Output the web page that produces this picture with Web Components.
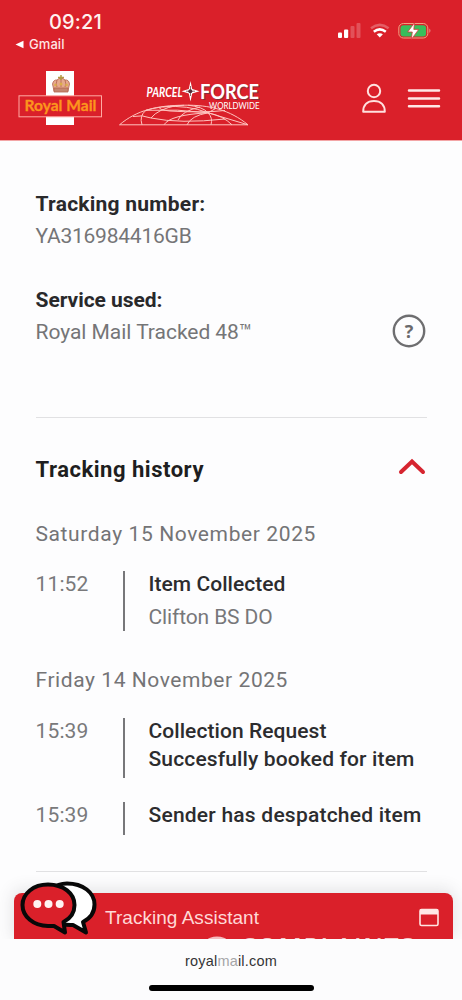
<!DOCTYPE html>
<html lang="en">
<head>
<meta charset="utf-8">
<title>Tracking</title>
<style>
html, body { margin: 0; height: 100%; overflow: hidden; background: #fdfdfe; }
body { font-family: Roboto, "Liberation Sans", sans-serif; color: #2b2b2d; }
</style>
</head>
<body>
<tracking-page></tracking-page>
<script>
const define = (name, html, ready) => customElements.define(name, class extends HTMLElement {
  connectedCallback() {
    if (this.shadowRoot) return;
    const t = document.createElement('template');
    t.innerHTML = html;
    this.attachShadow({ mode: 'open' }).appendChild(t.content.cloneNode(true));
    if (ready) ready(this);
  }
});

/* Single line of text whose letter spacing is adjusted to fill the width in "w". */
define('fit-text', `<style>:host{display:block;white-space:nowrap}span{display:inline-block}</style><span><slot></slot></span>`, el => {
  const span = el.shadowRoot.querySelector('span');
  const n = el.textContent.length;
  const natural = span.getBoundingClientRect().width;
  span.style.letterSpacing = ((+el.getAttribute('w') - natural) / n).toFixed(3) + 'px';
});

define('status-bar', `<style>
:host{display:flex;justify-content:space-between;height:62px;color:#fff;font-family:Inter,sans-serif}
.l{padding:10px 0 0 15px}
.time{padding-left:34px;font-size:20px;line-height:24px;font-weight:500;color:#fff2ef}
.back{display:flex;align-items:center;gap:5px;margin-top:1px;font-size:13px;line-height:18px;font-weight:500;color:#ffe5e4}
.r{padding:21px 29px 0 0}
svg{display:block}
</style>
<div class="l"><div class="time"><fit-text w="53">09:21</fit-text></div>
<div class="back"><svg width="9" height="9" viewBox="0 0 9 9"><path d="M.5 4.5 8.500 .7v7.600z" fill="#fff"/></svg><fit-text w="35.500">Gmail</fit-text></div></div>
<div class="r"><svg width="95" height="20" viewBox="338 21 95 20">
<g fill="#fff"><rect x="338" y="32.5" width="4" height="5.5" rx="1"/><rect x="344" y="29.5" width="4.2" height="8.5" rx="1"/><g opacity=".22"><rect x="350.5" y="26" width="4" height="12" rx="1"/><rect x="356.5" y="23" width="4" height="15" rx="1"/></g></g>
<g fill="none" stroke="#fff" stroke-width="2.5"><path d="M371 28.3q8.800-6.800 17.600 0" opacity=".28"/><path d="M373.800 31.700q6-4.700 12 0"/></g><path d="M376.700 34.300q3.100-2.200 6.200 0l-3.100 3.300z" fill="#fff"/>
<rect x="398.800" y="23.500" width="29" height="14.500" rx="4.500" fill="none" stroke="#f0a080" stroke-width="1"/><rect x="400.500" y="25.200" width="25.600" height="11.200" rx="3" fill="#39bd5b"/><path d="M429.300 28.500q2.400 2 0 4.500z" fill="#e88886"/><path d="M414.500 22.800 407.700 32h4.600l-1 7.400 7.400-10h-4.900z" fill="#fff" stroke="#d82b30" stroke-width=".7"/>
</svg></div>`);

define('site-header', `<style>
:host{display:block;height:141px;background:#da202a;border-bottom:1px solid #f3a5a6;box-sizing:border-box}
nav{display:flex;align-items:flex-start;padding:6px 22px 0 18px}
.pf{margin-left:15px}.user{margin:14px 0 0 99px}.menu{margin:18px 0 0 19px}
svg{display:block;flex:none;overflow:visible}
</style><status-bar></status-bar>
<nav>
<svg width="85" height="60" viewBox="18 68 85 60"><rect x="46" y="71" width="28" height="54" fill="#fff"/>
<g stroke="#b5654f" stroke-width=".8"><path d="M54 91 52.500 84q1-4.500 4.500-4 2-2.300 4-1.500 2-.8 4 1.500 3.800-.6 4.500 4L68 91z" fill="#e6a98c"/><path d="M57 80q-1.500 4 0 7m8-7q1.500 4 0 7M61 79v8" fill="none"/><path d="M54 88h14v4H54z" fill="#c4866f"/><path d="M58 77.500h6M61 75v5" stroke="#b49b43" stroke-width="1.500"/></g><g fill="#dcae48"><circle cx="55.500" cy="85" r="1.300"/><circle cx="61" cy="84" r="1.500"/><circle cx="66.500" cy="85" r="1.300"/></g>
<rect x="19" y="95.800" width="82.500" height="21" fill="#da202a" stroke="#ffaaa3" stroke-width="1"/>
<text x="24.500" y="110.500" font-family="Lato,sans-serif" font-weight="700" font-size="15.500" fill="#fc951d" stroke="#fc951d" stroke-width=".3" textLength="72" lengthAdjust="spacingAndGlyphs">Royal Mail</text></svg>
<svg class="pf" width="144" height="60" viewBox="118 68 144 60">
<g font-family="Lato,sans-serif" fill="#fff"><text x="146.500" y="97" font-size="13.500" font-weight="700" font-style="italic" textLength="36" lengthAdjust="spacingAndGlyphs">PARCEL</text>
<text x="200" y="98.500" font-size="20" font-weight="700" textLength="59" lengthAdjust="spacingAndGlyphs" style="text-shadow:1px 1px 0 #85313a">FORCE</text>
<text x="209" y="108.500" font-size="8.500" textLength="50.500" lengthAdjust="spacingAndGlyphs">WORLDWIDE</text></g>
<path d="M190.500 81l1.700 8 7.300 2.200-7.300 2.200-1.700 8-1.700-8-7.300-2.200 7.300-2.200z" fill="#fff"/><path d="M190.500 86v10M186 91.200h9" stroke="#6a2830" stroke-width=".7"/><circle cx="190.300" cy="91.200" r="2" fill="#532b35"/>
<g fill="none" stroke="#ffc4bf" stroke-width="1"><path d="M119.500 124.800H248C230 110 210 104.800 184 105.200 157 105.500 137 110 119.500 124.800z"/><path d="M142 124.800q-3-9 4-14.500 12-4 38-5M164 124.800q6-10 44-12M187 124.800q4-9 21-12M211 124.800q2-7-3-12M232 124.800q-9-9-24-12M248 124.800 208 112.800M208 112.800q-20-8-45-6M208 112.800q-30-4-62-2.500M208 112.800q-5-6-20-7.600M208 112.800l8-4.500M133 116.500q9-2 18 1.500 29 6 74 1M159 107q0 3 11 4 32 2 55-.500M151 118q7-9 26-12.500M178 120q4-9 22-13"/></g></svg>
<svg class="user" width="28" height="32" viewBox="361 82 28 32"><g fill="none" stroke="#ffe1df" stroke-width="2"><circle cx="374" cy="91" r="6.200"/><path d="M363.200 111.700c0-7 4.200-10.800 10.800-10.800s10.800 3.800 10.800 10.800z" stroke-linejoin="round"/></g></svg>
<svg class="menu" width="32" height="24" viewBox="408 86 32 24"><path d="M409 90.500h30M409 98.500h30M409 106.300h30" stroke="#ffe8e6" stroke-width="2.500" stroke-linecap="round"/></svg>
</nav>`);

define('info-field', `<style>
:host{display:flex;justify-content:space-between;align-items:flex-end;font-size:21px;line-height:32px}
.label{font-weight:700;color:#29292b}.value{color:#757577;font-weight:400}
</style><div><div class="label"><slot name="label"></slot></div><div class="value"><slot name="value"></slot></div></div><slot></slot>`);

define('help-icon', `<style>:host{display:block;width:34px;height:34px}svg{display:block}</style>
<svg width="34" height="34" viewBox="0 0 34 34"><circle cx="17" cy="17" r="15.200" fill="none" stroke="#6e6e70" stroke-width="2.400"/><text x="17" y="23.500" text-anchor="middle" font-family="Open Sans,sans-serif" font-weight="700" font-size="18" fill="#6a6a6c">?</text></svg>`);

define('history-heading', `<style>:host{display:flex;justify-content:space-between;align-items:flex-start;font-size:22px;font-weight:700;line-height:32px;color:#1e1e20}svg{display:block;margin:4px 1px 0 0}</style><slot></slot>
<svg width="28" height="18" viewBox="0 0 28 18"><path d="M3 14 14 3.500 25 14" fill="none" stroke="#d62530" stroke-width="4" stroke-linecap="round"/></svg>`);

define('day-label', `<style>:host{display:block;font-size:21px;line-height:32px;color:#747476}</style><slot></slot>`);

define('track-event', `<style>
:host{display:grid;grid-template-columns:87px 2.500px 1fr;column-gap:0;min-height:60px;font-size:21px;line-height:27.500px}
:host([short]){min-height:33px}
.time{color:#79797b}.bar{background:#77777a}
.body{padding-left:23.500px;font-weight:500;color:#2c2c2e;height:0}
.place{font-weight:400;color:#77777a;margin-top:5px}
</style><div class="time"><slot name="time"></slot></div><div class="bar"></div><div class="body"><slot></slot><div class="place"><slot name="place"></slot></div></div>`);

define('assistant-bar', `<style>
:host{display:block;height:46px;margin:0 9.500px 0 14px;background:#da202a;border-radius:8px 8px 0 0;box-shadow:0 -2px 16px 2px rgba(60,60,70,.13);position:relative}
.row{display:flex;align-items:center;height:48px;padding:0 13.500px 0 91px;justify-content:space-between;font:19px/24px "Liberation Sans",sans-serif;color:#ffd9d7}
fit-text{margin-top:2px}
svg{display:block}.chat{position:absolute;left:5px;top:-13px}
.mark{position:absolute;left:186px;top:43px;width:220px;height:3px;overflow:hidden}
.mark svg{width:220px;height:40px}
</style><div class="row"><fit-text w="154">Tracking Assistant</fit-text><svg width="20" height="19" viewBox="0 0 20 19"><rect x="1" y="1.500" width="18" height="16" rx="1.500" fill="none" stroke="#ffe5e2" stroke-width="1.600"/><path d="M1 1.500h18v5H1z" fill="#ffe8e6"/></svg></div>
<svg class="chat" width="80" height="58" viewBox="19 880 80 58"><g stroke="#080808" stroke-width="4" stroke-linejoin="round"><path d="M67 883.500c16 0 27.500 9 27.500 21 0 8-4.500 14-11.500 17.500l3 10.500-13-7.500C57 926 47 916 47 904s8-20.500 20-20.500z" fill="#fff"/><path d="M48 884.500c-14.500 0-25.500 9-25.500 20.500s11 21 25.500 21h6l11 6.500-1.500-10.500c7-3.500 11-9.500 11-17 0-11.500-11-20.500-26.500-20.500z" fill="#da202a"/></g><g fill="#fff3f2"><circle cx="37.300" cy="904" r="4"/><circle cx="48.500" cy="904" r="4"/><circle cx="59.700" cy="904" r="4"/></g></svg>
<div class="mark"><svg viewBox="0 0 220 40"><ellipse cx="17" cy="18" rx="18" ry="17.500" fill="#fff" opacity=".7"/><text x="40" y="19.500" font-family="Open Sans,sans-serif" font-weight="600" font-size="25" textLength="174" fill="#fff" opacity=".75">COMPLAINTS</text></svg></div>`);

define('browser-footer', `<style>
:host{display:flex;flex-direction:column;align-items:center;height:61px;background:#fcfcfd;position:relative;z-index:1}
.url{margin-top:13px;font:14.500px/18px "Liberation Sans",sans-serif;color:#343436}
.home{width:165px;height:6px;border-radius:3px;background:#000;margin-top:15px}
</style><div class="url"><fit-text w="92">royal<span style="color:#a5a5a7">ma</span>il.com</fit-text></div><div class="home"></div>`);

define('tracking-page', `<style>
:host{display:flex;flex-direction:column;height:1000px;width:462px}
main{flex:none;padding:46.500px 35px 0 35.500px;height:752px;box-sizing:border-box}
.gap{margin-top:32px}
hr{border:0;height:1px;background:#e1e1e3;margin:0}
help-icon{margin:0 1.500px 0 0}
</style>
<site-header></site-header>
<main>
<info-field><fit-text slot="label" w="170">Tracking number:</fit-text><fit-text slot="value" w="156">YA316984416GB</fit-text></info-field>
<info-field class="gap"><fit-text slot="label" w="127">Service used:</fit-text><fit-text slot="value" w="216.500">Royal Mail Tracked 48™</fit-text><help-icon></help-icon></info-field>
<hr style="margin-top:69.500px">
<history-heading style="margin-top:35.500px"><fit-text w="168.500">Tracking history</fit-text></history-heading>
<day-label style="margin-top:32.500px"><fit-text w="280.500">Saturday 15 November 2025</fit-text></day-label>
<track-event style="margin-top:21px"><fit-text slot="time" w="53">11:52</fit-text><fit-text w="137">Item Collected</fit-text><fit-text slot="place" w="124">Clifton BS DO</fit-text></track-event>
<day-label style="margin-top:33px"><fit-text w="252.500">Friday 14 November 2025</fit-text></day-label>
<track-event style="margin-top:22px"><fit-text slot="time" w="53">15:39</fit-text><fit-text w="178">Collection Request</fit-text><fit-text w="266">Succesfully booked for item</fit-text></track-event>
<track-event short style="margin-top:24px"><fit-text slot="time" w="53">15:39</fit-text><fit-text w="273">Sender has despatched item</fit-text></track-event>
<hr style="margin-top:36px">
</main>
<assistant-bar></assistant-bar>
<browser-footer></browser-footer>`);
</script>
</body>
</html>
